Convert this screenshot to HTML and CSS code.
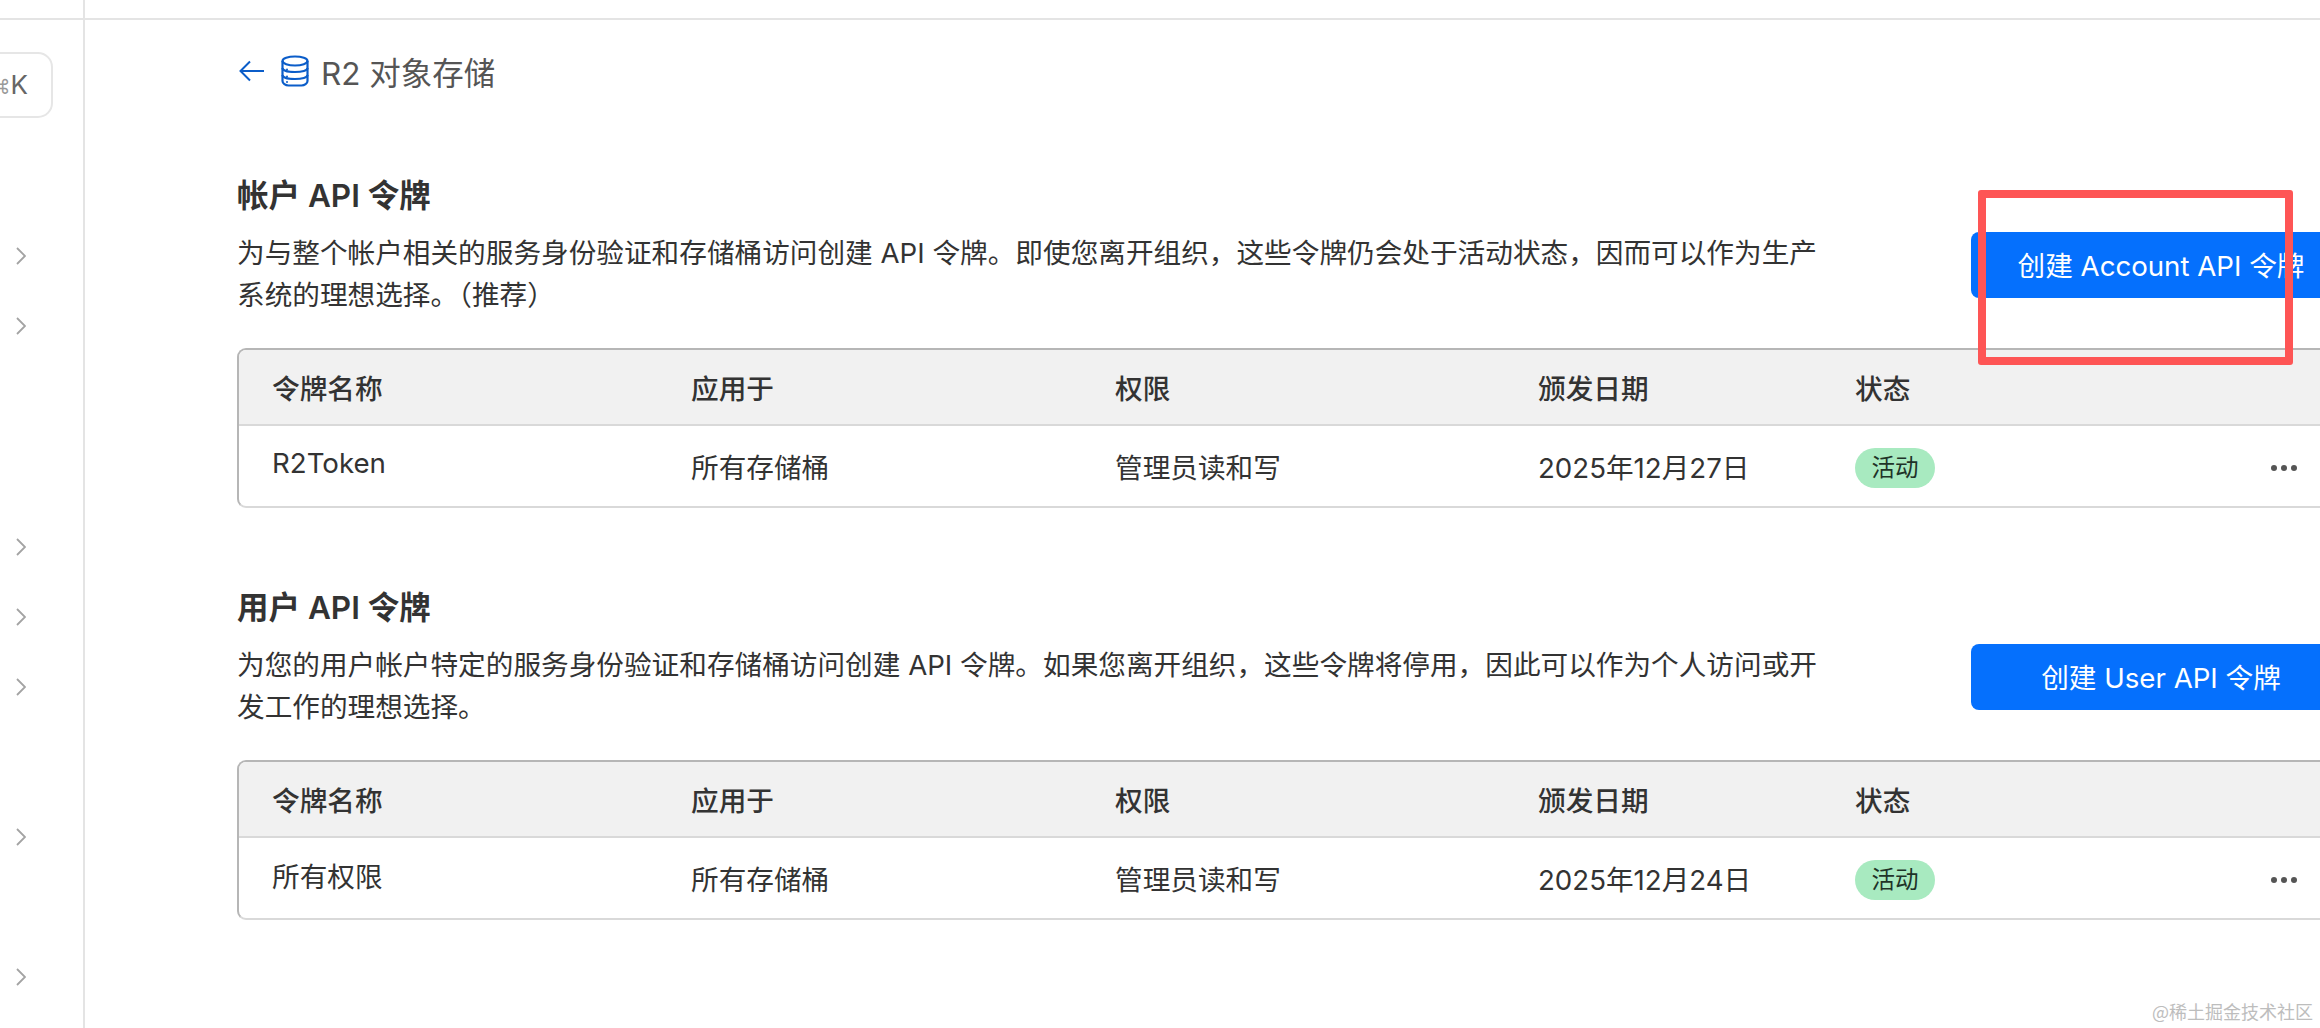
FILE: index.html
```html
<!DOCTYPE html>
<html lang="zh-CN">
  <head>
    <meta charset="utf-8" />
    <meta name="viewport" content="width=device-width, initial-scale=1" />
    <title>R2 对象存储</title>
    <link rel="stylesheet" href="styles.css">
  </head>
  <body>
    <div class="shell">
      <aside class="sidebar">
        <div class="strip"></div>
        <div class="search-key"><span class="cmd">⌘</span>K</div>
        <div class="nav-row first"><svg class="chevron" viewBox="0 0 10 18"><path d="M1 1l8 8-8 8"/></svg></div>
        <div class="nav-row"><svg class="chevron" viewBox="0 0 10 18"><path d="M1 1l8 8-8 8"/></svg></div>
        <div class="nav-row group"><svg class="chevron" viewBox="0 0 10 18"><path d="M1 1l8 8-8 8"/></svg></div>
        <div class="nav-row"><svg class="chevron" viewBox="0 0 10 18"><path d="M1 1l8 8-8 8"/></svg></div>
        <div class="nav-row"><svg class="chevron" viewBox="0 0 10 18"><path d="M1 1l8 8-8 8"/></svg></div>
        <div class="nav-row gap-small"><svg class="chevron" viewBox="0 0 10 18"><path d="M1 1l8 8-8 8"/></svg></div>
        <div class="nav-row gap-last"><svg class="chevron" viewBox="0 0 10 18"><path d="M1 1l8 8-8 8"/></svg></div>
      </aside>
      <main class="main">
        <div class="strip"></div>
        <div class="content">
          <div class="crumb">
            <svg class="back" viewBox="0 0 26 22"><path d="M25 11H2M11 1.500L1.500 11l9.500 9.500"/></svg>
            <svg class="db" viewBox="0 0 28 32">
              <ellipse cx="14" cy="6" rx="12.500" ry="4.500"/>
              <path d="M1.500 6v20c0 2.500 3 4.500 6 4.500h13c3 0 6-2 6-4.500V6"/>
              <path d="M1.500 13c0 2.500 5.500 4 12.500 4s12.500-1.500 12.500-4M1.500 20c0 2.500 5.500 4 12.500 4s12.500-1.500 12.500-4"/>
              <circle class="dot" cx="6" cy="14.500" r="1"/>
              <circle class="dot" cx="6" cy="21.500" r="1"/>
              <circle class="dot" cx="6" cy="27" r="1"/>
            </svg>
            <span class="crumb-title">R2 对象存储</span>
          </div>

          <section class="token-section">
            <h2>帐户 API 令牌</h2>
            <div class="section-row">
              <p>为与整个帐户相关的服务身份验证和存储桶访问创建 API 令牌。即使您离开组织，这些令牌仍会处于活动状态，因而可以作为生产系统的理想选择。（推荐）</p>
              <button class="create">创建 Account API 令牌</button>
            </div>
            <table class="tokens">
              <thead>
                <tr><th>令牌名称</th><th>应用于</th><th>权限</th><th>颁发日期</th><th>状态</th><th></th></tr>
              </thead>
              <tbody>
                <tr>
                  <td class="name">R2Token</td>
                  <td>所有存储桶</td>
                  <td>管理员读和写</td>
                  <td>2025年12月27日</td>
                  <td><span class="badge">活动</span></td>
                  <td class="more"><span></span><span></span><span></span></td>
                </tr>
              </tbody>
            </table>
          </section>

          <section class="token-section">
            <h2>用户 API 令牌</h2>
            <div class="section-row">
              <p>为您的用户帐户特定的服务身份验证和存储桶访问创建 API 令牌。如果您离开组织，这些令牌将停用，因此可以作为个人访问或开发工作的理想选择。</p>
              <button class="create">创建 User API 令牌</button>
            </div>
            <table class="tokens">
              <thead>
                <tr><th>令牌名称</th><th>应用于</th><th>权限</th><th>颁发日期</th><th>状态</th><th></th></tr>
              </thead>
              <tbody>
                <tr>
                  <td class="name">所有权限</td>
                  <td>所有存储桶</td>
                  <td>管理员读和写</td>
                  <td>2025年12月24日</td>
                  <td><span class="badge">活动</span></td>
                  <td class="more"><span></span><span></span><span></span></td>
                </tr>
              </tbody>
            </table>
          </section>
        </div>
      </main>
    </div>
    <div class="annotation"></div>
    <div class="watermark">@稀土掘金技术社区</div>
  </body>
</html>
```

FILE: styles.css
```css
* {box-sizing: border-box}
html, body {height: 100%}
body {
  margin: 0;
  overflow: hidden;
  background: #fff;
  color: #333;
  font-family: Inter, "Noto Sans CJK SC", sans-serif;
  font-size: 27.65px;
}
.shell {
  display: flex;
  height: 100%;
}
.strip {
  height: 20px;
  border-bottom: 2px solid #e4e4e4;
}

/* sidebar, labels are cut off in the shot */
.sidebar {
  flex: 0 0 85px;
  border-right: 2px solid #e4e4e4;
  overflow: hidden;
}
.search-key {
  width: 120px;
  height: 66px;
  margin: 32px 0 0 -67px;
  padding-right: 23px;
  border: 2px solid #e6e6e6;
  border-radius: 15px;
  color: #666;
  font-size: 26px;
  line-height: 62px;
  text-align: right;
}
.cmd {
  font-family: "DejaVu Sans", sans-serif;
  font-size: 20px;
  color: #999;
}
.nav-row {
  display: flex;
  align-items: center;
  height: 70px;
  padding-left: 16px;
}
.nav-row.first {margin-top: 103px}
.nav-row.group {margin-top: 151px}
.nav-row.gap-small {margin-top: 80px}
.nav-row.gap-last {margin-top: 70px}
.chevron {
  width: 10px;
  height: 18px;
  fill: none;
  stroke: #a3a3a3;
  stroke-width: 1.8;
}

/* main column */
.main {
  flex: 1;
  min-width: 0;
}
.content {
  width: 2266px;
  padding-left: 152px;
}
.crumb {
  display: flex;
  align-items: center;
  height: 32px;
  margin-top: 35px;
  color: #555;
  font-size: 31.500px;
}
.back {
  width: 26px;
  height: 22px;
  margin-left: 2px;
  fill: none;
  stroke: #0b5dc9;
  stroke-width: 2;
}
.db {
  width: 28px;
  height: 32px;
  margin-left: 16px;
  fill: none;
  stroke: #0b5dc9;
  stroke-width: 2.200;
}
.db .dot {
  fill: #0b5dc9;
  stroke: none;
}
.crumb-title {margin-left: 12px}

.token-section {margin-top: 89px}
.token-section + .token-section {margin-top: 80px}
.token-section h2 {
  margin: 0 0 16px;
  font-size: 31.500px;
  font-weight: 600;
  line-height: 40px;
}
.section-row {
  display: flex;
  justify-content: space-between;
  align-items: flex-start;
}
.section-row p {
  width: 1590px;
  margin: 0;
  line-height: 42px;
}
.create {
  flex: 0 0 380px;
  height: 66px;
  padding-bottom: 3px;
  border: 0;
  border-radius: 8px;
  background: #0570fd;
  color: #fff;
  font: inherit;
}

.tokens {
  width: 100%;
  margin-top: 32px;
  border: 2px solid #d9d9d9;
  border-top-color: #b6b6b6;
  border-left-color: #b6b6b6;
  border-radius: 9px;
  border-spacing: 0;
  table-layout: fixed;
  overflow: hidden;
}
.tokens th {
  height: 76px;
  padding: 0 0 0 32px;
  border-bottom: 2px solid #d9d9d9;
  background: #f1f1f1;
  font-weight: 500;
  text-align: left;
}
.tokens th:nth-child(1) {width: 420px}
.tokens th:nth-child(2) {width: 424px}
.tokens th:nth-child(3) {width: 423px}
.tokens th:nth-child(4) {width: 317px}
.tokens td {
  height: 80px;
  padding: 0 0 0 32px;
}
.tokens th:first-child, .tokens td:first-child {padding-left: 33px}
.tokens td.name {padding-bottom: 6px}
.badge {
  display: inline-block;
  width: 80px;
  height: 40px;
  margin-top: 3px;
  border-radius: 20px;
  background: #a8eac0;
  color: #1f3328;
  font-size: 23.500px;
  line-height: 40px;
  text-align: center;
  vertical-align: middle;
}
.tokens td.more {
  padding: 0 52px 0 0;
  text-align: right;
}
.more span {
  display: inline-block;
  width: 6px;
  height: 6px;
  margin-left: 4px;
  border-radius: 50%;
  background: #555;
  vertical-align: middle;
}

/* marks pasted on top of the shot */
.annotation {
  position: absolute;
  left: 1978px;
  top: 190px;
  width: 315px;
  height: 175px;
  border: 8px solid #fe5555;
  border-radius: 3px;
}
.watermark {
  position: absolute;
  right: 7px;
  bottom: 7px;
  color: #bdbdbd;
  font-family: "Noto Sans CJK SC", sans-serif;
  font-size: 18px;
  line-height: 20px;
}
```
